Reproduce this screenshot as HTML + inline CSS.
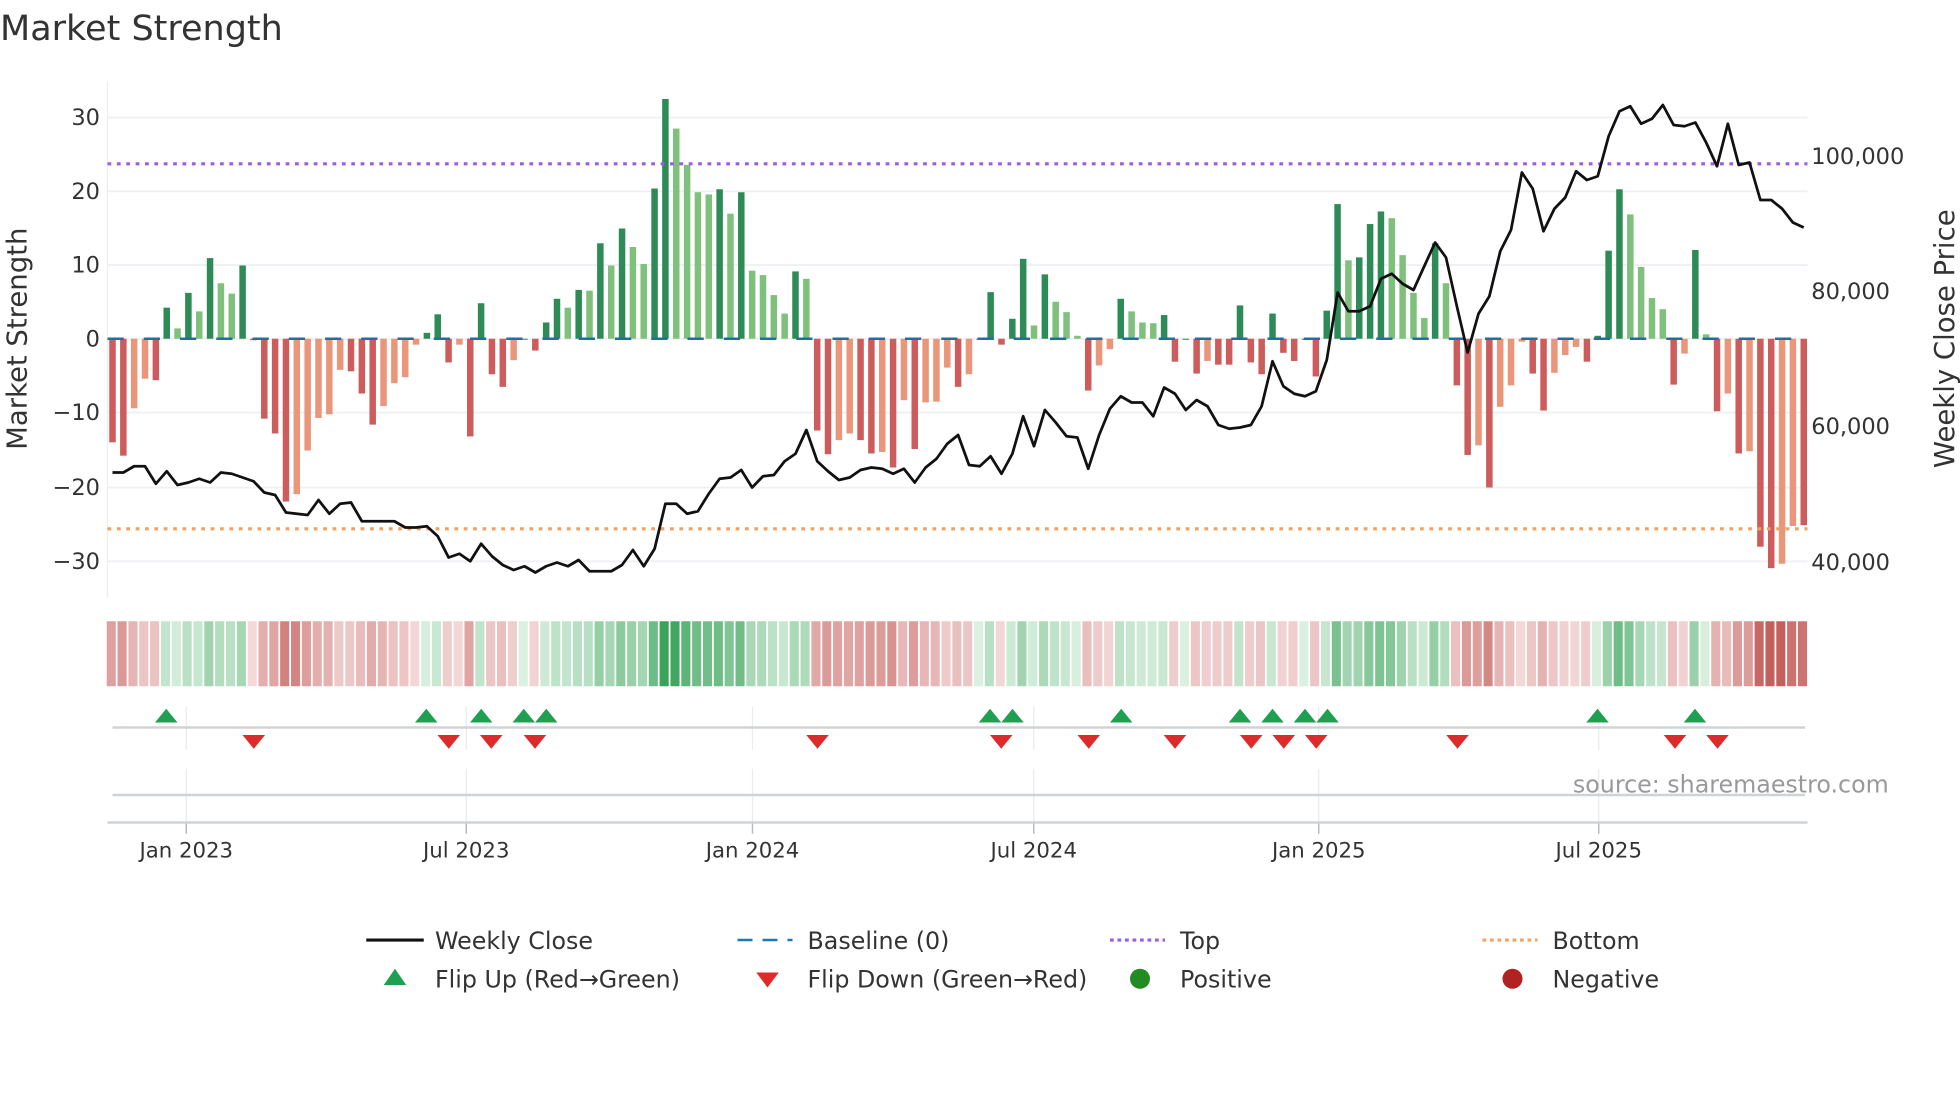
<!DOCTYPE html>
<html><head><meta charset="utf-8"><style>
html,body{margin:0;padding:0;background:#fff;width:1960px;height:1102px;overflow:hidden}
svg{display:block}
text{font-family:"DejaVu Sans","Liberation Sans",sans-serif;fill:#333}
</style></head><body>
<svg id="s" width="1960" height="1102" viewBox="0 0 1568 881.6" preserveAspectRatio="none" xmlns="http://www.w3.org/2000/svg">
<g id="grid"></g>
<g id="bars"></g>
<g id="strip"></g>
<g id="marks"></g>
<text x="0" y="32" font-size="28">Market Strength</text>
<g font-size="18" text-anchor="end">
<text x="80" y="100">30</text><text x="80" y="159">20</text><text x="80" y="218">10</text><text x="80" y="277">0</text>
<text x="80" y="336">−10</text><text x="80" y="396">−20</text><text x="80" y="455">−30</text>
</g>
<g font-size="18">
<text x="1449" y="131">100,000</text><text x="1449" y="239">80,000</text><text x="1449" y="347">60,000</text><text x="1449" y="456">40,000</text>
</g>
<text font-size="22" transform="translate(21,271) rotate(-90)" text-anchor="middle">Market Strength</text>
<text font-size="22" transform="translate(1563,271) rotate(-90)" text-anchor="middle">Weekly Close Price</text>
<g font-size="17" text-anchor="middle">
<text x="149" y="686">Jan 2023</text><text x="373" y="686">Jul 2023</text><text x="602" y="686">Jan 2024</text>
<text x="827" y="686">Jul 2024</text><text x="1055" y="686">Jan 2025</text><text x="1279" y="686">Jul 2025</text>
</g>
<text x="1511" y="634" font-size="19" text-anchor="end" style="fill:#999">source: sharemaestro.com</text>
<g font-size="19">
<line x1="293" y1="752" x2="339" y2="752" stroke="#111" stroke-width="2.5"/>
<text x="348" y="759">Weekly Close</text>
<line x1="590" y1="752" x2="634" y2="752" stroke="#1f77b4" stroke-width="2" stroke-dasharray="12,8"/>
<text x="646" y="759">Baseline (0)</text>
<line x1="888" y1="752" x2="932" y2="752" stroke="#9b5de5" stroke-width="2.5" stroke-dasharray="3,3"/>
<text x="944" y="759">Top</text>
<line x1="1186" y1="752" x2="1230" y2="752" stroke="#f4a460" stroke-width="2.5" stroke-dasharray="3,3"/>
<text x="1242" y="759">Bottom</text>
<polygon points="307,788 325,788 316,775" fill="#1ea050"/>
<text x="348" y="790">Flip Up (Red→Green)</text>
<polygon points="605,778 623,778 614,790" fill="#dd2a2a"/>
<text x="646" y="790">Flip Down (Green→Red)</text>
<circle cx="912" cy="783" r="8" fill="#228b22"/>
<text x="944" y="790">Positive</text>
<circle cx="1210" cy="783" r="8" fill="#b22222"/>
<text x="1242" y="790">Negative</text>
</g>
</svg>
<script>
var NS="http://www.w3.org/2000/svg";
function el(p,t,a){var e=document.createElementNS(NS,t);for(var k in a)e.setAttribute(k,a[k]);p.appendChild(e);return e;}
var B=[[-14,1],[-15.8,1],[-9.4,0],[-5.4,0],[-5.6,1],[4.2,1],[1.4,0],[6.2,1],[3.7,0],[10.9,1],[7.5,0],[6.1,0],[9.9,1],[-0.2,1],
[-10.8,1],[-12.8,1],[-22,1],[-21,0],[-15.1,0],[-10.7,0],[-10.2,0],[-4.2,0],[-4.4,1],[-7.4,1],[-11.6,1],[-9.1,0],[-6,0],[-5.2,0],[-0.8,0],
[0.8,1],[3.3,1],[-3.2,1],[-0.8,0],[-13.2,1],[4.8,1],[-4.8,1],[-6.5,1],[-2.9,0],[0,1],[-1.6,1],[2.2,1],[5.4,1],[4.2,0],[6.6,1],[6.5,0],
[12.9,1],[9.9,0],[14.9,1],[12.4,0],[10.1,0],[20.3,1],[32.4,1],[28.4,0],[23.5,0],[19.8,0],[19.5,0],[20.2,1],[16.9,0],[19.8,1],[9.2,0],
[8.6,0],[5.9,0],[3.4,0],[9.1,1],[8.1,0],[-12.4,1],[-15.6,1],[-13.7,0],[-12.8,0],[-13.7,1],[-15.5,1],[-15.3,0],[-17.4,1],[-8.3,0],[-14.9,1],
[-8.6,0],[-8.5,0],[-3.9,0],[-6.5,1],[-4.8,0],
[0,1],[6.3,1],[-0.8,1],[2.7,1],[10.8,1],[1.8,0],[8.7,1],[5,0],[3.6,0],[0.4,0],[-7,1],[-3.6,0],[-1.4,0],[5.4,1],[3.7,0],[2.2,0],[2.1,0],
[3.2,1],[-3.1,1],[0,1],[-4.7,1],[-3,0],[-3.5,1],[-3.5,1],[4.5,1],[-3.2,1],[-4.8,1],[3.4,1],[-1.9,1],[-3,1],[0,1],[-5.1,1],[3.8,1],
[18.2,1],[10.6,0],[11,1],[15.5,1],[17.2,1],[16.3,0],[11.3,0],[6.2,0],[2.8,0],[12.9,1],[7.5,0],[-6.3,1],[-15.7,1],[-14.4,0],[-20.1,1],
[-9.2,0],[-6.3,0],[-0.4,0],[-4.7,1],[-9.7,1],[-4.6,0],[-2.2,0],[-1.1,0],[-3.1,1],[0.4,1],[11.9,1],[20.2,1],[16.8,0],[9.7,0],[5.5,0],[4,0],
[-6.2,1],[-2,0],[12,1],[0.6,0],[-9.8,1],[-7.4,0],[-15.5,1],[-15.2,0],[-28.1,1],[-31,1],[-30.4,0],[-25.3,0],[-25.2,1]];
var P=[378,378,373,373,387,377,388,386,383,386,378,379,382,385,394,396,410,411,412,400,411,403,402,417,417,417,417,422,422,421,429,446,443,449,435,445,452,456,453,458,453,450,453,448,457,457,457,452,440,453,439,403,403,411,409,395,383,382,376,390,381,380,369,363,344,369,377,384,382,376,374,375,379,375,386,374,367,355,348,372,
373,365,379,363,333,357,328,338,349,350,375,348,327,317,322,322,333,310,315,328,320,325,340,343,342,340,325,289,309,315,317,313,288,234,249,249,245,223,219,227,232,213,194,206,245,282,251,237,201,184,138,151,185,167,158,137,144,141,109,89,85,99,95,84,100,101,98,114,133,99,132,130,160,160,167,178,182];
var N=B.length,x0=90,x1=1443,st=(x1-x0)/(N-1);
var g=document.getElementById('grid');
el(g,'line',{x1:86,y1:65,x2:86,y2:478,stroke:'#eceef1','stroke-width':1});
[94,153,212,271,330,390,449].forEach(function(y){el(g,'line',{x1:86,y1:y,x2:1446,y2:y,stroke:'#eef0f4','stroke-width':1.5});});
[149,373,602,827,1055,1279].forEach(function(x){el(g,'line',{x1:x,y1:565,x2:x,y2:600,stroke:'#e8ecef','stroke-width':1});el(g,'line',{x1:x,y1:615,x2:x,y2:658,stroke:'#e8ecef','stroke-width':1});el(g,'line',{x1:x,y1:658,x2:x,y2:667,stroke:'#bbb','stroke-width':1.2});});
el(g,'line',{x1:90,y1:582,x2:1444,y2:582,stroke:'#d0d3d6','stroke-width':2});
el(g,'line',{x1:90,y1:636,x2:1444,y2:636,stroke:'#d0d3d6','stroke-width':2});
el(g,'line',{x1:86,y1:658,x2:1446,y2:658,stroke:'#d0d3d6','stroke-width':2});
var b=document.getElementById('bars');
for(var i=0;i<N;i++){var v=B[i][0],x=x0+i*st,y=271-v*5.92;var c=v>=0?(B[i][1]?'#2e8b57':'#80c07d'):(B[i][1]?'#cd5c5c':'#e9967a');
el(b,'rect',{x:x-2.6,y:Math.min(y,271),width:5.2,height:Math.max(Math.abs(v*5.92),0.8),fill:c});}
el(b,'line',{x1:86,y1:271,x2:1446,y2:271,stroke:'#1f6fa0','stroke-width':2,'stroke-dasharray':'13,16'});
el(b,'line',{x1:86,y1:131,x2:1446,y2:131,stroke:'#9b5de5','stroke-width':2.5,'stroke-dasharray':'3,4.5'});
el(b,'line',{x1:86,y1:423,x2:1446,y2:423,stroke:'#f0a060','stroke-width':2.5,'stroke-dasharray':'3,4.5'});
var d='';for(var i=0;i<P.length;i++){d+=(i?'L':'M')+(x0+i*st).toFixed(1)+','+P[i];}
el(b,'path',{d:d,fill:'none',stroke:'#111','stroke-width':2.2,'stroke-linejoin':'round'});
var s=document.getElementById('strip');
function mix(a,c,t){return 'rgb('+[0,1,2].map(function(k){return Math.round(a[k]+(c[k]-a[k])*t);}).join(',')+')';}
for(var i=0;i<N;i++){var v=B[i][0],x=x0+i*st,t=Math.min(Math.abs(v)/30,1);
var c=v>=0?mix([218,240,224],[58,163,90],t):mix([244,218,218],[196,96,92],t);
el(s,'rect',{x:x-st/2-0.3,y:497,width:st-1.4,height:52,fill:c});}
var m=document.getElementById('marks');
[133,341,385,419,437,792,810,897,992,1018,1044,1062,1278,1356].forEach(function(x){el(m,'polygon',{points:(x-9)+',578 '+(x+9)+',578 '+x+',567',fill:'#1ea050'});});
[203,359,393,428,654,801,871,940,1001,1027,1053,1166,1340,1374].forEach(function(x){el(m,'polygon',{points:(x-9)+',588 '+(x+9)+',588 '+x+',599',fill:'#dd2a2a'});});
</script>
</body></html>
